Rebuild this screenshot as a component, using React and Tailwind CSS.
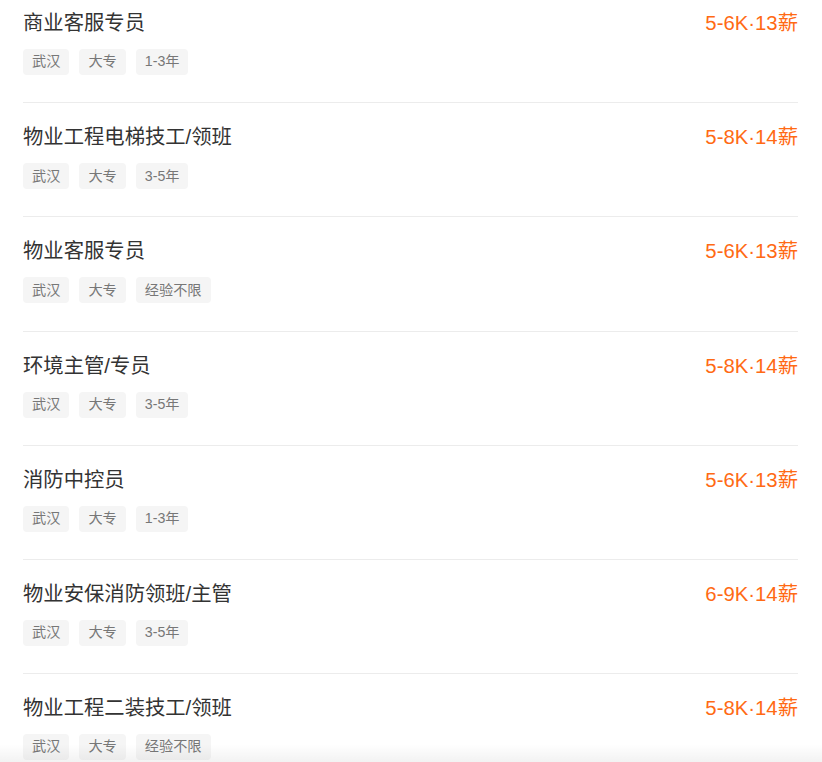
import React from 'react';

const jobs = [
  { title: '商业客服专员', salary: '5-6K·13薪', tags: ['武汉', '大专', '1-3年'] },
  { title: '物业工程电梯技工/领班', salary: '5-8K·14薪', tags: ['武汉', '大专', '3-5年'] },
  { title: '物业客服专员', salary: '5-6K·13薪', tags: ['武汉', '大专', '经验不限'] },
  { title: '环境主管/专员', salary: '5-8K·14薪', tags: ['武汉', '大专', '3-5年'] },
  { title: '消防中控员', salary: '5-6K·13薪', tags: ['武汉', '大专', '1-3年'] },
  { title: '物业安保消防领班/主管', salary: '6-9K·14薪', tags: ['武汉', '大专', '3-5年'] },
  { title: '物业工程二装技工/领班', salary: '5-8K·14薪', tags: ['武汉', '大专', '经验不限'] },
];

const App = () => {
  return (
    <div
      className="relative h-[762px] overflow-hidden bg-white pl-[23px] pr-[24px]"
      style={{ fontFamily: '"Liberation Sans", "Noto Sans CJK SC", sans-serif' }}
    >
      {/* Job list */}
      <ul>
        {jobs.map((job, i) => (
          <li
            key={i}
            className={`border-b border-[#ececec] pb-[27.2px] ${i === 0 ? 'pt-[9px]' : 'pt-[20px]'}`}
          >
            <div className="flex items-center justify-between">
              <span className="text-[20.33px] leading-[28px] text-[#333]">{job.title}</span>
              <span className="text-[20.33px] leading-[28px] text-[#ff6a14]">{job.salary}</span>
            </div>
            <div className="mt-[12px] flex gap-[10px]">
              {job.tags.map((tag, j) => (
                <span
                  key={j}
                  className="flex h-[26px] items-center rounded-[4px] bg-[#f5f5f5] px-[9px] text-[14.2px] text-[#777]"
                >
                  {tag}
                </span>
              ))}
            </div>
          </li>
        ))}
      </ul>

      {/* Bottom shade */}
      <div className="pointer-events-none absolute bottom-0 left-0 right-0 h-[18px] bg-gradient-to-t from-black/[0.05] to-transparent" />
    </div>
  );
};

export default App;
